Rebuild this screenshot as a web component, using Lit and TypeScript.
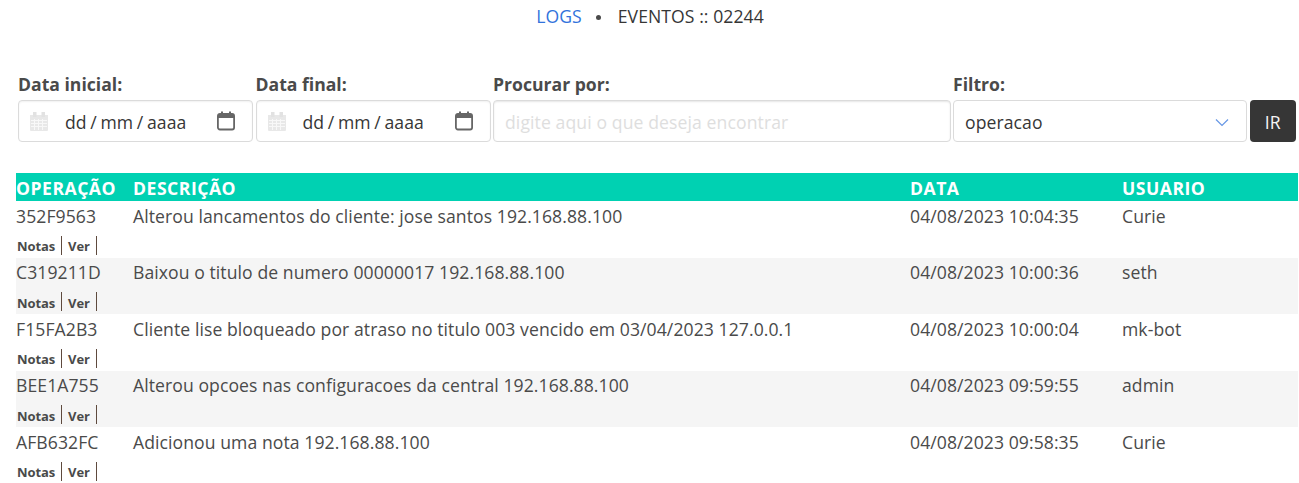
import { LitElement, css, html, svg } from 'lit';
import { customElement } from 'lit/decorators.js';

type LogRow = { op: string; desc: string; date: string; user: string };

const ROWS: LogRow[] = [
  { op: '352F9563', desc: 'Alterou lancamentos do cliente: jose santos 192.168.88.100', date: '04/08/2023 10:04:35', user: 'Curie' },
  { op: 'C319211D', desc: 'Baixou o titulo de numero 00000017 192.168.88.100', date: '04/08/2023 10:00:36', user: 'seth' },
  { op: 'F15FA2B3', desc: 'Cliente lise bloqueado por atraso no titulo 003 vencido em 03/04/2023 127.0.0.1', date: '04/08/2023 10:00:04', user: 'mk-bot' },
  { op: 'BEE1A755', desc: 'Alterou opcoes nas configuracoes da central 192.168.88.100', date: '04/08/2023 09:59:55', user: 'admin' },
  { op: 'AFB632FC', desc: 'Adicionou uma nota 192.168.88.100', date: '04/08/2023 09:58:35', user: 'Curie' },
];

const gridIcon = svg`<svg class="cal-left" width="18" height="19" viewBox="0 0 18 19" aria-hidden="true">
  <path fill="#e8e8e8" d="M0 3h18v15a1 1 0 0 1-1 1H1a1 1 0 0 1-1-1z"/>
  <path fill="#e2e2e2" d="M3 0h3.5v5H3zM11.5 0H15v5h-3.5z"/>
  <path stroke="#f8f8f8" stroke-width="1" d="M1 8.5h16M1 11.5h16M1 14.5h16M4.5 7v11M8.5 7v11M12.5 7v11"/>
</svg>`;

const calIcon = svg`<svg class="cal-right" width="20" height="20" viewBox="0 0 20 20" aria-hidden="true">
  <path fill="#666" d="M5 0.5h2v3H5zM13 0.5h2v3h-2z"/>
  <rect x="1.9" y="2.9" width="16.2" height="15.6" rx="2" fill="none" stroke="#666" stroke-width="1.8"/>
  <path fill="#666" d="M2 3h16V7H2z"/>
</svg>`;

@customElement('app-root')
export class AppRoot extends LitElement {
  static styles = css`
    :host {
      display: block;
      font-family: 'Open Sans', 'Noto Sans', sans-serif;
      font-size: 17.6px;
      letter-spacing: 0.07px;
      color: #4a4a4a;
      background: #fff;
      height: 483px;
      overflow: hidden;
    }

    .top {
      display: flex;
      justify-content: center;
      align-items: center;
      gap: 15px;
      height: 32px;
      padding: 0 0 2px 1px;
      color: #363636;
    }

    .top a {
      color: #3273dc;
      text-decoration: none;
      margin-right: -0.5px;
    }

    .dot {
      width: 5px;
      height: 5px;
      border-radius: 50%;
      background: #4a4a4a;
      margin: 2px 1.5px 0 0;
    }

    .filters {
      display: grid;
      grid-template-columns: 235px 235px 457.5px 294px 46.5px;
      column-gap: 2.5px;
      margin: 38px 3px 0 18px;
    }

    .field label {
      display: block;
      height: 28px;
      line-height: 24px;
      font-weight: 700;
      letter-spacing: 0;
      color: #4a4a4a;
    }

    .control {
      box-sizing: border-box;
      height: 42px;
      border: 1px solid #dbdbdb;
      border-radius: 4px;
      background: #fff;
      display: flex;
      align-items: center;
      color: #363636;
    }

    .date {
      padding: 0 16px 0 11px;
      box-shadow: inset 0 1px 2px rgba(10, 10, 10, 0.06);
    }

    .date-text {
      margin-left: 17px;
      padding-top: 2px;
      flex: 1;
      word-spacing: -1px;
    }

    .cal-left {
      flex: none;
      margin-top: 1px;
    }

    .cal-right {
      flex: none;
      margin-top: -1px;
    }

    .search {
      padding: 2px 11px 0;
      letter-spacing: 0.1px;
      color: #dedede;
      box-shadow: inset 0 1px 2px rgba(10, 10, 10, 0.1);
    }

    .select {
      padding: 2px 17px 0 11px;
      justify-content: space-between;
    }

    .button {
      align-self: end;
      box-sizing: border-box;
      padding-top: 2px;
      height: 42px;
      border-radius: 4px;
      background: #363636;
      color: #f5f5f5;
      display: flex;
      align-items: center;
      justify-content: center;
    }

    .table {
      margin: 31px 1px 0 16px;
    }

    .head,
    .row {
      display: grid;
      grid-template-columns: 117px 777px 212px 1fr;
    }

    .head {
      height: 28px;
      line-height: 31px;
      background: #00d1b2;
      color: #fff;
      font-weight: 700;
      letter-spacing: 0.5px;
    }

    .row {
      height: 56.5px;
      grid-template-rows: 30px 24px;
      line-height: 30px;
      color: #4a4a4a;
    }

    .row:nth-child(even) {
      background: #f5f5f5;
      line-height: 28.5px;
    }

    .row > div {
      white-space: nowrap;
    }

    .actions {
      grid-column: 1 / -1;
      height: 24px;
      line-height: 24px;
      margin-top: 3px;
      font-size: 13px;
      font-weight: 700;
      letter-spacing: -0.1px;
      color: #4a4a4a;
      display: flex;
      align-items: center;
      gap: 6px;
      padding-left: 1px;
    }

    .sep {
      width: 1px;
      height: 19px;
      background: #5e4a3e;
      margin-top: -2px;
    }
  `;

  private renderDate(label: string) {
    return html`
      <div class="field">
        <label>${label}</label>
        <div class="control date">
          ${gridIcon}
          <span class="date-text">dd / mm / aaaa</span>
          ${calIcon}
        </div>
      </div>
    `;
  }

  render() {
    return html`
      <div class="top">
        <a href="#">LOGS</a>
        <span class="dot"></span>
        <span>EVENTOS :: 02244</span>
      </div>

      <div class="filters">
        ${this.renderDate('Data inicial:')}
        ${this.renderDate('Data final:')}
        <div class="field">
          <label>Procurar por:</label>
          <div class="control search">digite aqui o que deseja encontrar</div>
        </div>
        <div class="field">
          <label>Filtro:</label>
          <div class="control select">
            <span>operacao</span>
            <svg width="14" height="9" viewBox="0 0 14 9" aria-hidden="true">
              <path d="M1 1.5l6 6 6-6" fill="none" stroke="#3273dc" stroke-opacity="0.75" stroke-width="1.2"/>
            </svg>
          </div>
        </div>
        <div class="button">IR</div>
      </div>

      <div class="table">
        <div class="head">
          <div>OPERAÇÃO</div>
          <div>DESCRIÇÃO</div>
          <div>DATA</div>
          <div>USUARIO</div>
        </div>
        <div class="body">
          ${ROWS.map(
            (r) => html`
              <div class="row">
                <div>${r.op}</div>
                <div>${r.desc}</div>
                <div>${r.date}</div>
                <div>${r.user}</div>
                <div class="actions">
                  <span>Notas</span><span class="sep"></span>
                  <span>Ver</span><span class="sep"></span>
                </div>
              </div>
            `
          )}
        </div>
      </div>
    `;
  }
}
